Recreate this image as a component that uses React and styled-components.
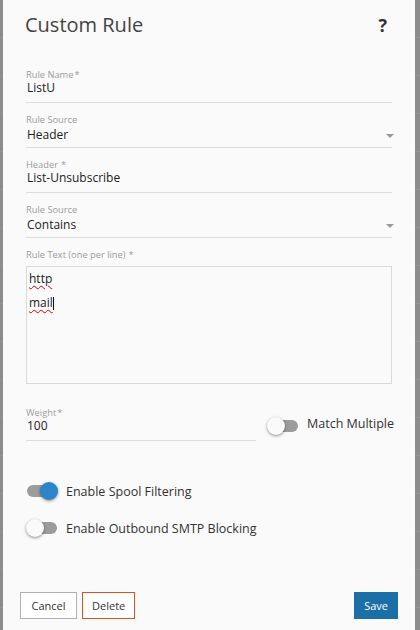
import React from 'react';
import styled, { createGlobalStyle } from 'styled-components';

const GlobalStyle = createGlobalStyle`
  html, body {
    margin: 0;
    padding: 0;
  }
  body {
    font-family: "Open Sans", "Noto Sans", sans-serif;
    background: repeating-linear-gradient(
      to bottom,
      #8c8c8c 0px,
      #8c8c8c 37px,
      #959595 37px,
      #959595 38px
    );
    min-height: 100vh;
  }
`;

const fields = [
  { label: 'Rule Name', required: true, tight: true, value: 'ListU' },
  { label: 'Rule Source', value: 'Header', select: true },
  { label: 'Header', required: true, value: 'List-Unsubscribe' },
  { label: 'Rule Source', value: 'Contains', select: true },
];

const Switch = ({ on }) => (
  <Track>
    <Knob $on={on} />
  </Track>
);

const App = () => {
  return (
    <>
      <GlobalStyle />
      <Backdrop>
        <Dialog>
          <TitleRow>
            <Title>Custom Rule</Title>
            <Help>?</Help>
          </TitleRow>

          <Form>
            {fields.map((f, i) => (
              <Field key={i}>
                <Label>
                  {f.label}
                  {f.required && <Req $tight={f.tight}>*</Req>}
                </Label>
                <Value $select={f.select}>
                  <span>{f.value}</span>
                  {f.select && <Caret />}
                </Value>
              </Field>
            ))}

            <Label>
              Rule Text (one per line)<Req>*</Req>
            </Label>
            <TextBox>
              <TextLine><Misspelt>http</Misspelt></TextLine>
              <TextLine><Misspelt>mail</Misspelt><Cursor /></TextLine>
            </TextBox>

            <WeightRow>
              <Field $width="230px" $last>
                <Label>
                  Weight<Req $tight>*</Req>
                </Label>
                <Value>
                  <span>100</span>
                </Value>
              </Field>
              <ToggleRow $offset="8px">
                <Switch on={false} />
                <ToggleLabel $lift="-3px">Match Multiple</ToggleLabel>
              </ToggleRow>
            </WeightRow>

            <ToggleRow $offset="40px">
              <Switch on />
              <ToggleLabel>Enable Spool Filtering</ToggleLabel>
            </ToggleRow>
            <ToggleRow $offset="17px">
              <Switch on={false} />
              <ToggleLabel>Enable Outbound SMTP Blocking</ToggleLabel>
            </ToggleRow>
          </Form>

          <Footer>
            <ButtonGroup>
              <Button $wide>Cancel</Button>
              <Button $variant="danger">Delete</Button>
            </ButtonGroup>
            <Button $variant="primary">Save</Button>
          </Footer>
        </Dialog>
      </Backdrop>
    </>
  );
};

export default App;

const Backdrop = styled.div`
  display: flex;
  padding-left: 3px;
  min-height: 100vh;
`;

const Dialog = styled.div`
  width: 412px;
  min-height: 100vh;
  box-sizing: border-box;
  background: #fafafa;
  padding: 11px 23px 0 23px;
  display: flex;
  flex-direction: column;
`;

const TitleRow = styled.div`
  display: flex;
  justify-content: space-between;
  align-items: baseline;
  height: 28px;
  margin-bottom: 31px;
`;

const Title = styled.h2`
  margin: 0 0 0 -1px;
  font-size: 20px;
  line-height: 28px;
  font-weight: 400;
  color: #444;
`;

const Help = styled.span`
  font-size: 18px;
  font-weight: 700;
  color: #333;
  margin-right: 5px;
`;

const Form = styled.div`
  display: flex;
  flex-direction: column;
`;

const Field = styled.div`
  width: ${p => p.$width || 'auto'};
  flex-shrink: 0;
  border-bottom: 1px solid #dcdcdc;
  padding-bottom: 5px;
  margin-bottom: ${p => (p.$last ? '0' : '12px')};
`;

const Label = styled.div`
  font-size: 9.3px;
  line-height: 10px;
  color: #9a9a9a;
  white-space: nowrap;
`;

const Req = styled.span`
  margin-left: ${p => (p.$tight ? '1px' : '3px')};
`;

const Value = styled.div`
  display: flex;
  justify-content: space-between;
  align-items: center;
  font-size: 12px;
  line-height: 18px;
  color: #222;
  margin-top: -1px;
  padding-left: 1px;
  padding-top: ${p => (p.$select ? '2px' : '0')};
  margin-bottom: ${p => (p.$select ? '-2px' : '0')};
`;

const Caret = styled.span`
  width: 0;
  height: 0;
  border-left: 4.5px solid transparent;
  border-right: 4.5px solid transparent;
  border-top: 4px solid #9a9a9a;
  margin-right: -2px;
  margin-top: 2px;
`;

const TextBox = styled.div`
  margin-top: 6px;
  height: 116px;
  border: 1px solid #dadada;
  padding: 0 2px;
  font-size: 12px;
  line-height: 24px;
  color: #1a1a1a;
`;

const TextLine = styled.div`
  display: flex;
  align-items: center;
`;

const Misspelt = styled.span`
  text-decoration: underline wavy #e00000;
  text-decoration-thickness: 1px;
  text-underline-offset: 2px;
`;

const Cursor = styled.span`
  display: inline-block;
  width: 1px;
  height: 13px;
  background: #111;
`;

const WeightRow = styled.div`
  display: flex;
  align-items: flex-start;
  gap: 11px;
  margin-top: 24px;
`;

const ToggleRow = styled.div`
  display: flex;
  align-items: center;
  height: 20px;
  margin-top: ${p => p.$offset || '0'};
  padding-left: 1px;
`;

const Track = styled.span`
  position: relative;
  display: inline-block;
  width: 30px;
  height: 12px;
  border-radius: 6px;
  background: #9c9c9c;
  flex-shrink: 0;
`;

const Knob = styled.span`
  position: absolute;
  top: -3px;
  left: ${p => (p.$on ? '13px' : '-1px')};
  width: 18px;
  height: 18px;
  border-radius: 50%;
  background: ${p => (p.$on ? '#2a86c8' : '#fafafa')};
  box-shadow: 0 1px 3px rgba(0, 0, 0, 0.45);
`;

const ToggleLabel = styled.span`
  margin-left: 9px;
  font-size: 12.5px;
  color: #333;
  position: relative;
  top: ${p => p.$lift || '0'};
  white-space: nowrap;
`;

const Footer = styled.div`
  display: flex;
  justify-content: space-between;
  margin: 54px -6px 0 -6px;
`;

const ButtonGroup = styled.div`
  display: flex;
  gap: 5px;
`;

const Button = styled.button`
  font-family: "Open Sans", "Noto Sans", sans-serif;
  font-size: 11px;
  height: 27px;
  padding: 0 ${p => (p.$wide ? '10.5px' : '9px')};
  cursor: pointer;
  border: 1px solid
    ${p => (p.$variant === 'danger' ? '#d9531e' : p.$variant === 'primary' ? '#1b6ea6' : '#b0b0b0')};
  background: ${p => (p.$variant === 'primary' ? '#1b6ea6' : '#fff')};
  color: ${p => (p.$variant === 'primary' ? '#fff' : '#333')};
`;
